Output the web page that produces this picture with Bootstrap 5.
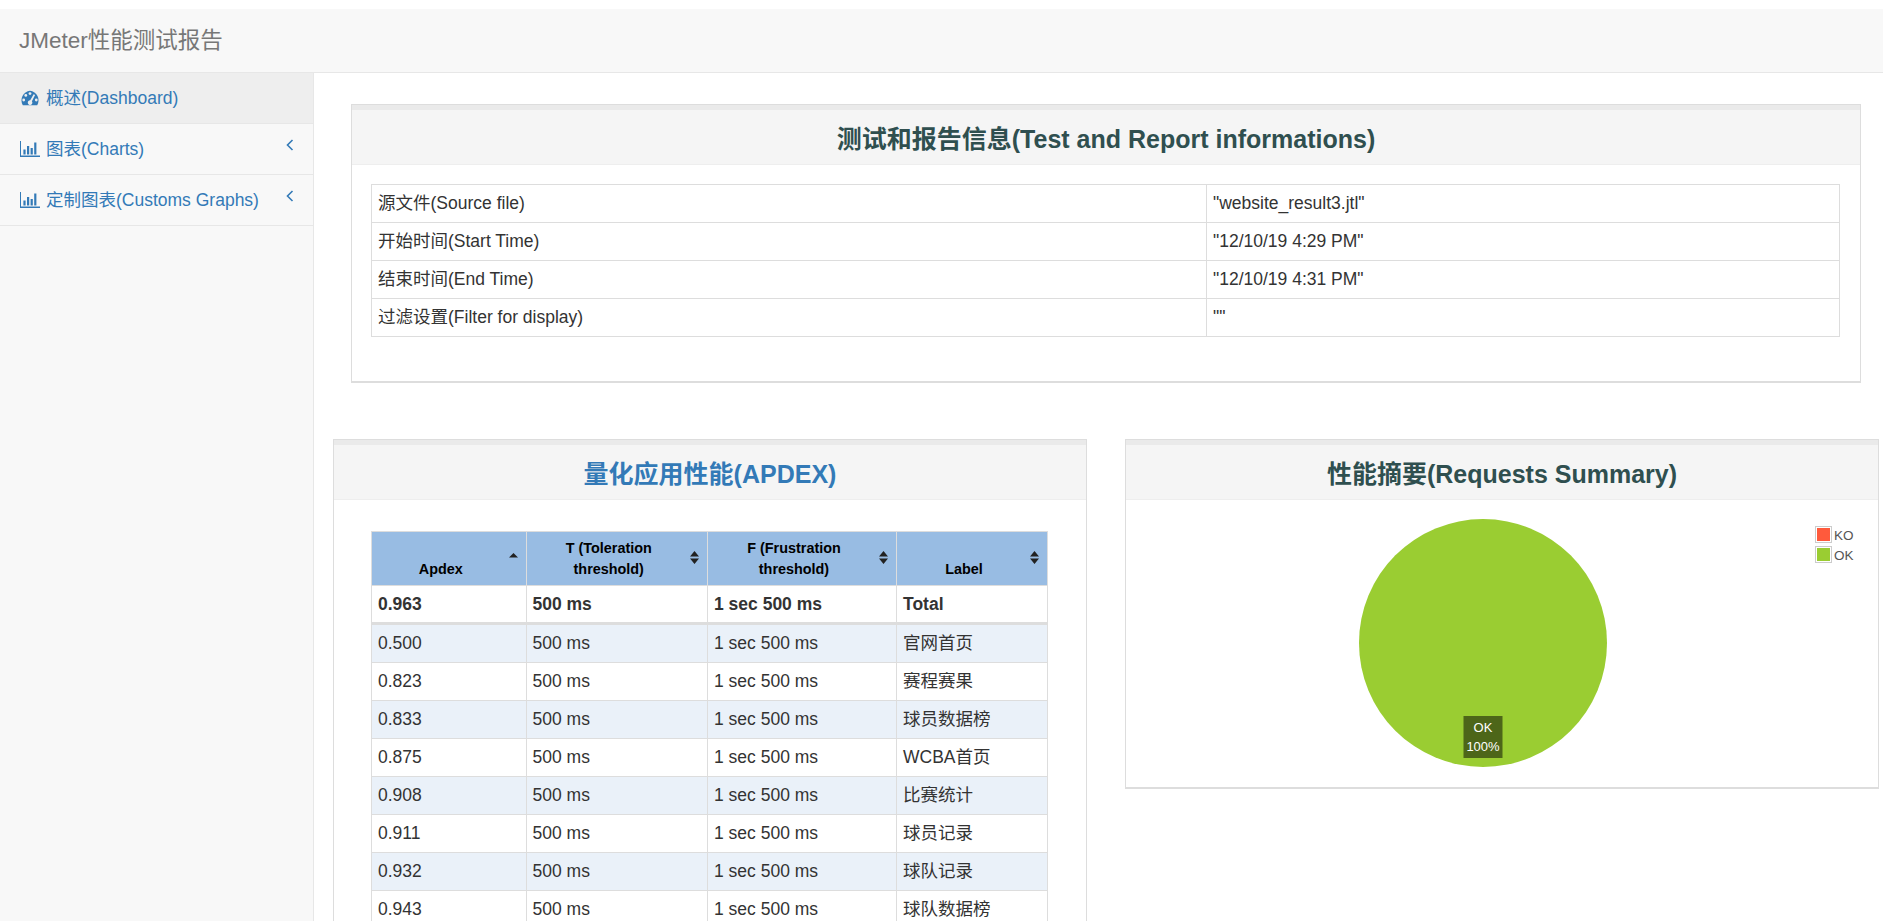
<!DOCTYPE html>
<html lang="en">
<head>
  <title>JMeter性能测试报告</title>
  <meta charset="utf-8">
  <meta name="viewport" content="width=device-width, initial-scale=1">
  <link href="https://cdn.jsdelivr.net/npm/bootstrap@5.3.0/dist/css/bootstrap.min.css" rel="stylesheet">
  <style>
    html, body { height: 100%; overflow: hidden; }
    body {
      padding-top: 9px;
      font-family: "Liberation Sans", "Noto Sans CJK SC", sans-serif;
      font-size: 17.5px;
      color: #333;
      display: flex;
      flex-direction: column;
    }
    /* top bar */
    .top-bar { height: 64px; background: #f8f8f8; border-bottom: 1px solid #e7e7e7; padding: 0 0 0 19px; flex: none; }
    .top-bar .navbar-brand { font-size: 22.5px; color: #777; margin: 0; padding: 0; }

    /* sidebar */
    .page-wrap { flex: 1 1 auto; min-height: 0; }
    .side-menu { width: 314px; flex: none; background: #f8f8f8; border-right: 1px solid #e7e7e7; }
    .side-menu .list-group-item {
      background: transparent;
      border-color: #e7e7e7;
      border-width: 0 0 1px;
      color: #337ab7;
      font-size: 17.5px;
      height: 51px;
      padding: 0 0 0 20px;
      line-height: 25px;
    }
    .side-menu .list-group-item.is-current { background: #eee; }
    .side-menu .list-group-item:last-child { border-bottom-width: 1px; }
    .menu-icon { width: 20px; height: 16px; margin-right: 6px; fill: #337ab7; flex: none; }
    .menu-arrow { width: 8px; height: 12px; margin: -8px 19px 0 auto; stroke: #337ab7; stroke-width: 1.6; fill: none; flex: none; }

    /* panels */
    .main-area { min-width: 0; padding: 31px 4px 0 19px; }
    .report-panel { border: 1px solid #ddd; border-bottom-width: 2px; border-radius: 0; background: #fff; }
    .report-panel .card-header {
      height: 60px;
      background: #f5f5f5;
      border-top: 5px solid #eaeaea;
      border-bottom: 1px solid #eee;
      border-radius: 0;
      padding: 0;
    }
    .report-panel h3 { font-size: 25px; font-weight: 700; line-height: 54px; margin: 2px 0 0; color: #2f4f4f; }
    .report-panel h3.is-link { color: #337ab7; }
    .info-panel { margin: 0 18px 56px 18px; }
    .info-body { padding: 19px 20px 44px 19px; }
    .panel-pair { gap: 38px; }
    .panel-pair > .report-panel { flex: 1 1 0; min-width: 0; }
    .apdex-body { padding: 31px 38px 0 37px; }
    .chart-panel { height: 350px; }
    .chart-body { padding: 0; }
    .chart-svg { display: block; width: 100%; height: 287px; }

    /* tables */
    .data-table { table-layout: fixed; margin: 0; border-color: #ddd; color: #333; }
    .data-table td { padding: 6px; line-height: 25px; color: #333; }
    .col-source { width: 835px; }
    .col-apdex { width: 154.5px; }
    .col-t { width: 181.5px; }
    .col-f { width: 189px; }
    .apdex-table th {
      position: relative;
      background: #98bce3;
      color: #000;
      font-size: 14.4px;
      font-weight: 700;
      line-height: 21px;
      text-align: center;
      vertical-align: bottom;
      padding: 5px 22px 5px 6px;
      height: 54px;
    }
    .apdex-table .sort-mark { position: absolute; right: 8px; top: 50%; margin-top: -8px; width: 9px; height: 13px; fill: #222; }
    .apdex-table .total-row td { font-weight: 700; border-bottom: 3px solid #ddd; line-height: 24px; }
    .apdex-table .alt-row td { background-color: #eaf1f9; }
  </style>
</head>
<body>

  <!-- Top bar -->
  <nav class="navbar top-bar">
    <a class="navbar-brand" href="#">JMeter性能测试报告</a>
  </nav>

  <div class="page-wrap d-flex">

    <!-- Sidebar -->
    <div class="side-menu">
      <div class="list-group list-group-flush rounded-0">
        <a href="#" class="list-group-item is-current d-flex align-items-center">
          <svg class="menu-icon" viewBox="0 0 20 16">
            <path d="M10 .8A9.6 9.6 0 0 0 2.8 15.2H17.2A9.6 9.6 0 0 0 10 .8Z"/>
            <g fill="#eee">
              <circle cx="3.7" cy="10" r="1.4"/><circle cx="5.8" cy="5.4" r="1.4"/>
              <circle cx="10" cy="3.6" r="1.4"/><circle cx="16.3" cy="10" r="1.4"/>
              <path d="M13.6 4.2l1.5.8-3.2 6.2a2.3 2.3 0 1 1-1.7-.9Z"/>
            </g>
          </svg>
          概述(Dashboard)
        </a>
        <a href="#" class="list-group-item d-flex align-items-center">
          <svg class="menu-icon" viewBox="0 0 20 16">
            <path d="M0 0h1v14.6h19V16H0ZM3.4 8.5h2.2v5H3.4ZM7 5h2.2v8.5H7ZM10.6 7h2.2v6.5h-2.2ZM14.2 1.5h2.2v12h-2.2Z"/>
          </svg>
          图表(Charts)
          <svg class="menu-arrow" viewBox="0 0 8 12"><path d="M6.5 1 1.5 6l5 5"/></svg>
        </a>
        <a href="#" class="list-group-item d-flex align-items-center">
          <svg class="menu-icon" viewBox="0 0 20 16">
            <path d="M0 0h1v14.6h19V16H0ZM3.4 8.5h2.2v5H3.4ZM7 5h2.2v8.5H7ZM10.6 7h2.2v6.5h-2.2ZM14.2 1.5h2.2v12h-2.2Z"/>
          </svg>
          定制图表(Customs Graphs)
          <svg class="menu-arrow" viewBox="0 0 8 12"><path d="M6.5 1 1.5 6l5 5"/></svg>
        </a>
      </div>
    </div>

    <!-- Main content -->
    <div class="main-area flex-grow-1">

      <!-- Test and report info -->
      <div class="card report-panel info-panel">
        <div class="card-header text-center"><h3>测试和报告信息(Test and Report informations)</h3></div>
        <div class="card-body info-body">
          <table class="table table-bordered data-table">
            <colgroup><col class="col-source"><col></colgroup>
            <tbody>
              <tr><td>源文件(Source file)</td><td>"website_result3.jtl"</td></tr>
              <tr><td>开始时间(Start Time)</td><td>"12/10/19 4:29 PM"</td></tr>
              <tr><td>结束时间(End Time)</td><td>"12/10/19 4:31 PM"</td></tr>
              <tr><td>过滤设置(Filter for display)</td><td>""</td></tr>
            </tbody>
          </table>
        </div>
      </div>

      <div class="d-flex align-items-start panel-pair">

        <!-- APDEX -->
        <div class="card report-panel">
          <div class="card-header text-center"><h3 class="is-link">量化应用性能(APDEX)</h3></div>
          <div class="card-body apdex-body">
            <table class="table table-bordered data-table apdex-table">
              <colgroup><col class="col-apdex"><col class="col-t"><col class="col-f"><col></colgroup>
              <thead>
                <tr>
                  <th>Apdex<svg class="sort-mark" viewBox="0 0 9 13"><path d="M4.5 2 9 6.5H0Z"/></svg></th>
                  <th>T (Toleration threshold)<svg class="sort-mark" viewBox="0 0 9 13"><path d="M4.5 0 9 5.5H0ZM0 7.5h9L4.5 13Z"/></svg></th>
                  <th>F (Frustration threshold)<svg class="sort-mark" viewBox="0 0 9 13"><path d="M4.5 0 9 5.5H0ZM0 7.5h9L4.5 13Z"/></svg></th>
                  <th>Label<svg class="sort-mark" viewBox="0 0 9 13"><path d="M4.5 0 9 5.5H0ZM0 7.5h9L4.5 13Z"/></svg></th>
                </tr>
              </thead>
              <tbody>
                <tr class="total-row"><td>0.963</td><td>500 ms</td><td>1 sec 500 ms</td><td>Total</td></tr>
                <tr class="alt-row"><td>0.500</td><td>500 ms</td><td>1 sec 500 ms</td><td>官网首页</td></tr>
                <tr><td>0.823</td><td>500 ms</td><td>1 sec 500 ms</td><td>赛程赛果</td></tr>
                <tr class="alt-row"><td>0.833</td><td>500 ms</td><td>1 sec 500 ms</td><td>球员数据榜</td></tr>
                <tr><td>0.875</td><td>500 ms</td><td>1 sec 500 ms</td><td>WCBA首页</td></tr>
                <tr class="alt-row"><td>0.908</td><td>500 ms</td><td>1 sec 500 ms</td><td>比赛统计</td></tr>
                <tr><td>0.911</td><td>500 ms</td><td>1 sec 500 ms</td><td>球员记录</td></tr>
                <tr class="alt-row"><td>0.932</td><td>500 ms</td><td>1 sec 500 ms</td><td>球队记录</td></tr>
                <tr><td>0.943</td><td>500 ms</td><td>1 sec 500 ms</td><td>球队数据榜</td></tr>
              </tbody>
            </table>
          </div>
        </div>

        <!-- Requests summary -->
        <div class="card report-panel chart-panel">
          <div class="card-header text-center"><h3>性能摘要(Requests Summary)</h3></div>
          <div class="card-body chart-body">
            <svg class="chart-svg" viewBox="0 0 752 287" font-family="'Liberation Sans', sans-serif">
              <circle cx="357" cy="143" r="124" fill="#9acd32"/>
              <rect x="337.5" y="216" width="39" height="42" fill="#4d6619"/>
              <text x="357" y="232" fill="#fff" font-size="13" text-anchor="middle">OK</text>
              <text x="357" y="251" fill="#fff" font-size="13" text-anchor="middle">100%</text>
              <rect x="689.5" y="26.5" width="16" height="16" fill="#fff" stroke="#ccc"/>
              <rect x="691" y="28" width="13" height="13" fill="#ff5a3c"/>
              <rect x="689.5" y="46.5" width="16" height="16" fill="#fff" stroke="#ccc"/>
              <rect x="691" y="48" width="13" height="13" fill="#9acd32"/>
              <text x="708" y="40" fill="#545454" font-size="13.5">KO</text>
              <text x="708" y="60" fill="#545454" font-size="13.5">OK</text>
            </svg>
          </div>
        </div>

      </div>
    </div>
  </div>

  <script src="https://cdn.jsdelivr.net/npm/bootstrap@5.3.0/dist/js/bootstrap.bundle.min.js"></script>
</body>
</html>
